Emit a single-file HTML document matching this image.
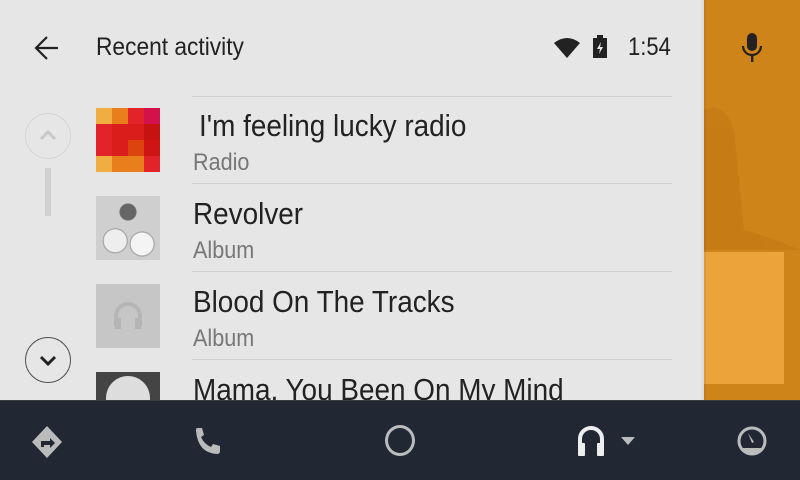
<!DOCTYPE html>
<html><head><meta charset="utf-8"><style>
*{margin:0;padding:0;box-sizing:border-box}
body{width:800px;height:480px;overflow:hidden;position:relative;background:#e6e6e6;font-family:"Liberation Sans",sans-serif;color:#222}
.orange{position:absolute;left:704px;top:0;width:96px;height:400px;background:#cf8419}
.sq{position:absolute;left:704px;top:252px;width:80px;height:132px;background:#eca43a}
.shadow{position:absolute;left:700px;top:0;width:6px;height:400px;background:linear-gradient(90deg,rgba(0,0,0,0),rgba(0,0,0,.08))}
.bar{position:absolute;left:0;top:400px;width:800px;height:80px;background:#212833;border-top:1px solid #3a3f44}
.t{position:absolute;white-space:nowrap;line-height:1;transform-origin:left top}
.line{position:absolute;left:192px;width:480px;height:1px;background:#cfcfcf}
.title{font-size:31px;color:#222;transform:scaleX(.9)}
.sub{font-size:24px;color:#777;transform:scaleX(.9)}
</style></head><body>
<div class="orange"></div>
<svg style="position:absolute;left:704px;top:70px" width="96" height="180"><g fill="#c67a14" opacity=".8"><path d="M0 40 Q20 30 30 60 L40 160 Q20 180 0 170Z"/><path d="M0 150 Q50 160 96 180 L0 180Z"/></g></svg>
<div class="sq"></div>
<div class="shadow"></div>
<svg style="position:absolute;left:34px;top:35px" width="26" height="26" viewBox="0 0 26 26"><path d="M24 13H3M13 2L2 13l11 11" stroke="#222" stroke-width="2.2" fill="none"/></svg>
<div class="t" style="left:96px;top:35px;font-size:25px;transform:scaleX(.91)">Recent activity</div>
<svg style="position:absolute;left:553px;top:36px" width="30" height="22"><path d="M1 7Q14 -3 27 7L14 22Z" fill="#222"/></svg>
<svg style="position:absolute;left:592px;top:34px" width="16" height="26"><rect x="1" y="4" width="14" height="20" fill="#222"/><rect x="5" y="1" width="6" height="4" fill="#222"/><path d="M9 8L5 15h3l-1 5 4-7H8z" fill="#e6e6e6"/></svg>
<div class="t" style="left:628px;top:35px;font-size:25px;transform:scaleX(.88)">1:54</div>
<svg style="position:absolute;left:740px;top:32px" width="24" height="32"><rect x="7" y="1" width="10" height="18" rx="5" fill="#222"/><path d="M3 14a9 9 0 0 0 18 0" stroke="#222" stroke-width="2.2" fill="none"/><rect x="11" y="22" width="2.4" height="8" fill="#222"/></svg>
<div style="position:absolute;left:25px;top:113px;width:46px;height:46px;border:1px solid #d6d6d6;border-radius:50%"></div>
<svg style="position:absolute;left:38px;top:126px" width="20" height="20"><path d="M3 13l7-7 7 7" stroke="#c8c8c8" stroke-width="3" fill="none"/></svg>
<div style="position:absolute;left:45px;top:168px;width:6px;height:48px;background:#d0d0d0"></div>
<div style="position:absolute;left:25px;top:337px;width:46px;height:46px;border:1.5px solid #555;border-radius:50%"></div>
<svg style="position:absolute;left:38px;top:350px" width="20" height="20"><path d="M3 7l7 7 7-7" stroke="#222" stroke-width="3" fill="none"/></svg>
<div class="line" style="top:96px"></div>
<div class="line" style="top:183px"></div>
<div class="line" style="top:271px"></div>
<div class="line" style="top:359px"></div>
<div style="position:absolute;left:96px;top:108px;width:64px;height:64px;display:grid;grid-template-columns:repeat(4,16px);grid-template-rows:repeat(4,16px)">
<i style="background:#efad42"></i><i style="background:#e87e1c"></i><i style="background:#e1232a"></i><i style="background:#d3114a"></i>
<i style="background:#e1232a"></i><i style="background:#d81d1b"></i><i style="background:#d81d1b"></i><i style="background:#c71212"></i>
<i style="background:#e1232a"></i><i style="background:#d81d1b"></i><i style="background:#dd430e"></i><i style="background:#cf1414"></i>
<i style="background:#efad42"></i><i style="background:#e87e1c"></i><i style="background:#e87e1c"></i><i style="background:#e1232a"></i>
</div>
<div style="position:absolute;left:96px;top:196px;width:64px;height:64px;background:radial-gradient(circle at 30% 70%,#eee 0 11px,#999 12px,transparent 13px),radial-gradient(circle at 72% 75%,#f4f4f4 0 11px,#999 12px,transparent 13px),radial-gradient(circle at 50% 25%,#666 0 8px,transparent 9px),#cfcfcf"></div>
<div style="position:absolute;left:96px;top:284px;width:64px;height:64px;background:#c6c6c6"></div>
<svg style="position:absolute;left:108px;top:296px" width="40" height="40"><path d="M8 30V20a12 12 0 0 1 24 0v10" stroke="#b5b5b5" stroke-width="4" fill="none"/><rect x="7" y="22" width="6" height="11" fill="#b5b5b5"/><rect x="27" y="22" width="6" height="11" fill="#b5b5b5"/></svg>
<div style="position:absolute;left:96px;top:372px;width:64px;height:28px;background:#444;overflow:hidden"><div style="position:absolute;left:10px;top:4px;width:44px;height:44px;border-radius:50%;background:#ddd"></div></div>
<div class="t title" style="left:199px;top:110px">I'm feeling lucky radio</div>
<div class="t sub" style="left:193px;top:151px">Radio</div>
<div class="t title" style="left:193px;top:198px">Revolver</div>
<div class="t sub" style="left:193px;top:239px">Album</div>
<div class="t title" style="left:193px;top:286px">Blood On The Tracks</div>
<div class="t sub" style="left:193px;top:327px">Album</div>
<div style="position:absolute;left:190px;top:360px;width:500px;height:40px;overflow:hidden"><div class="t title" style="left:3px;top:14px">Mama, You Been On My Mind</div></div>
<div class="bar">
<svg style="position:absolute;left:30px;top:24px" width="34" height="34"><path d="M17 1L32 17 17 33 2 17Z" fill="#bbb"/><path d="M11 22v-6h9v-3l5 5-5 5v-3h-6v2z" fill="#212833"/></svg>
<svg style="position:absolute;left:192px;top:24px" width="32" height="32"><path d="M5 3h5l2 7-3 2q3 7 10 10l2-3 7 2v5q0 3-3 3Q6 28 4 6q0-3 1-3z" fill="#bbb"/></svg>
<div style="position:absolute;left:385px;top:24px;width:30px;height:31px;border:3px solid #bbb;border-radius:50%"></div>
<svg style="position:absolute;left:575px;top:23px" width="64" height="34"><path d="M5 30V15a11 11 0 0 1 22 0v15" stroke="#eee" stroke-width="4" fill="none"/><rect x="3" y="19" width="7" height="13" rx="1" fill="#eee"/><rect x="22" y="19" width="7" height="13" rx="1" fill="#eee"/><path d="M46 13h14l-7 8z" fill="#bbb"/></svg>
<svg style="position:absolute;left:734px;top:23px" width="36" height="34"><circle cx="18" cy="17" r="13" stroke="#bbb" stroke-width="3" fill="none"/><path d="M8 24h20a13 13 0 0 1-20 0z" fill="#bbb"/><path d="M14 9l6 9-2 1z" fill="#bbb"/></svg>
</div>
</body></html>
